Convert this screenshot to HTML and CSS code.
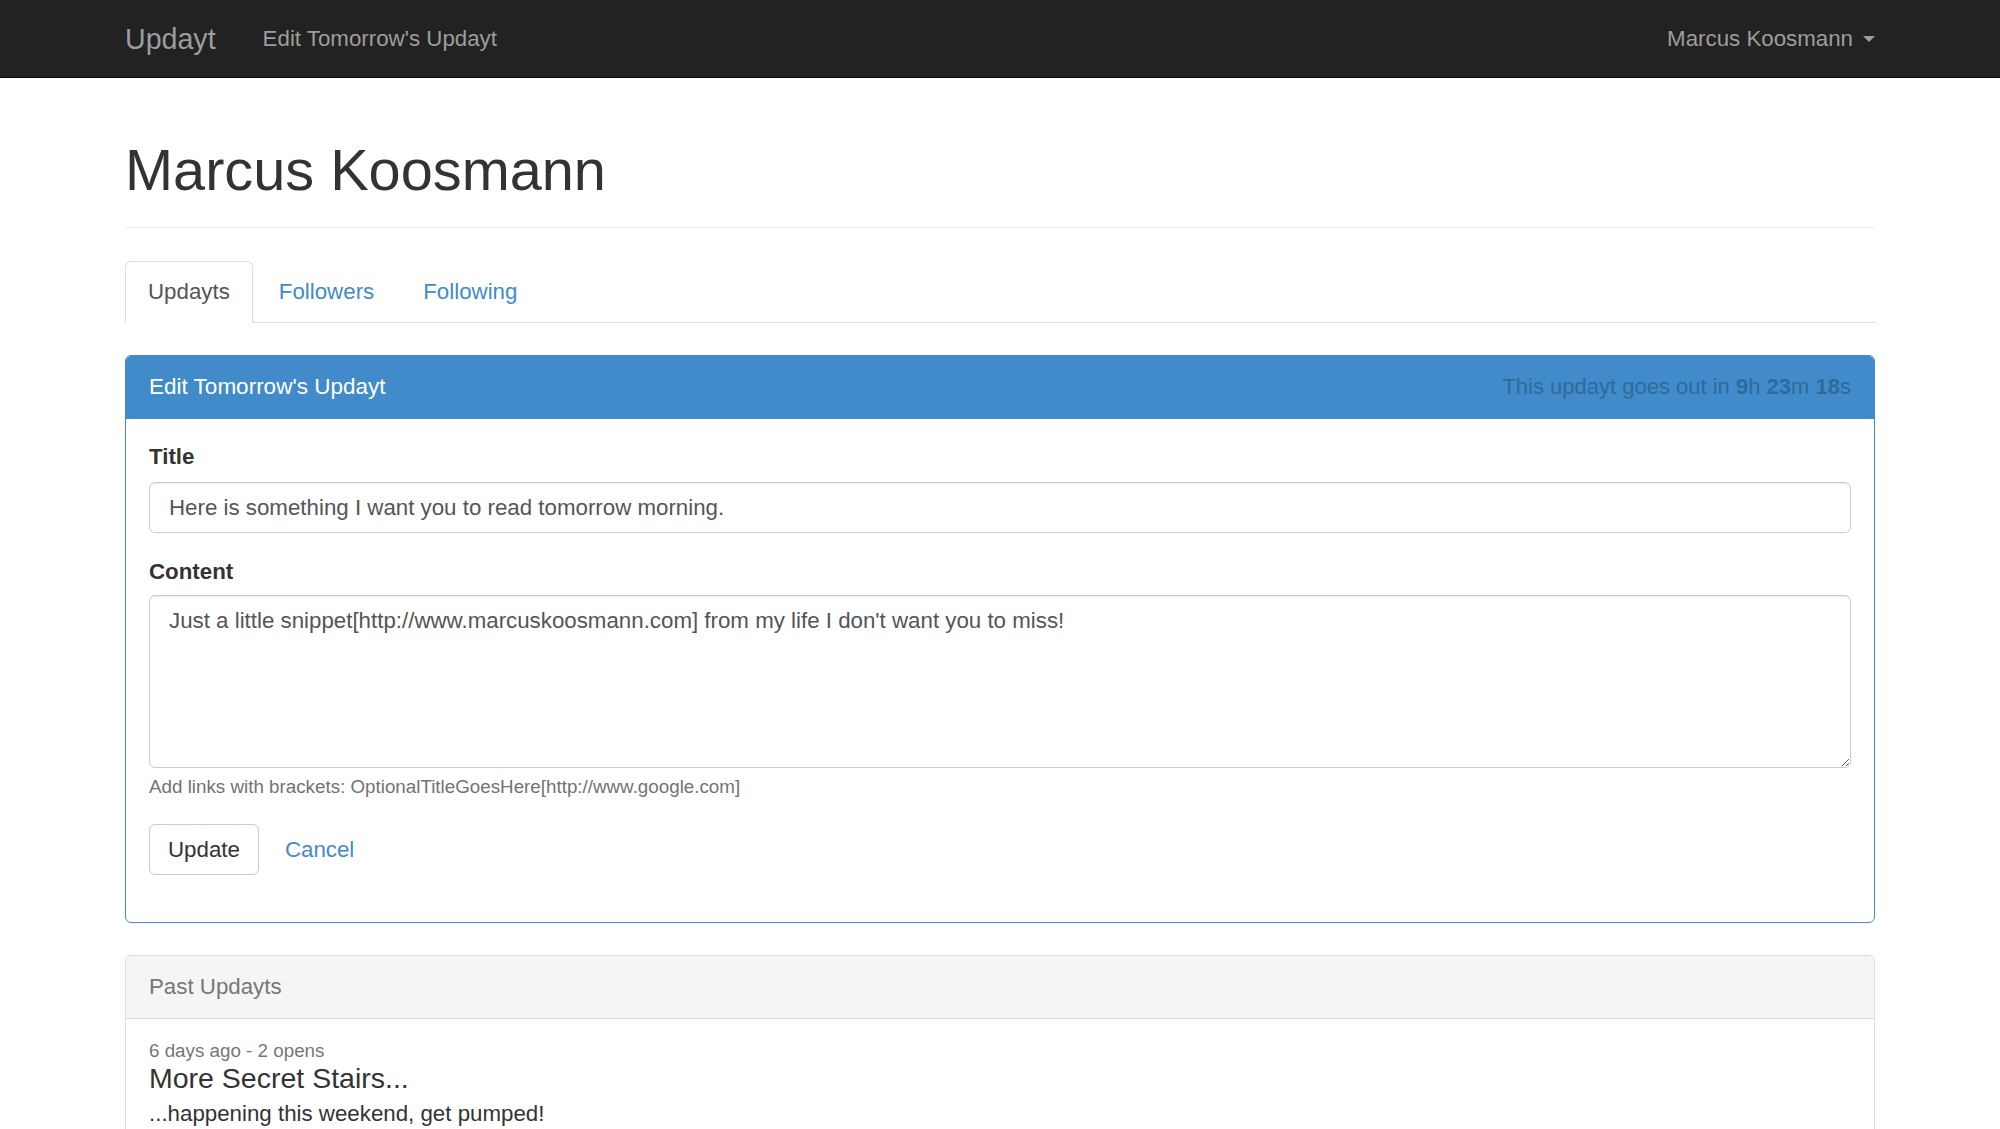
FILE: index.html
```html
<!DOCTYPE html>
<html lang="en">
<head>
<meta charset="utf-8">
<title>Updayt</title>
<link rel="stylesheet" href="styles.css">
</head>
<body>
<nav class="navbar">
  <div class="container nav-inner">
    <div class="nav-left">
      <a class="brand" href="#">Updayt</a>
      <a class="nav-link" href="#">Edit Tomorrow's Updayt</a>
    </div>
    <a class="nav-user" href="#">Marcus Koosmann<span class="caret"></span></a>
  </div>
</nav>

<main class="container">
  <div class="page-header">
    <h1>Marcus Koosmann</h1>
  </div>

  <ul class="tabs">
    <li class="tab active"><a href="#">Updayts</a></li>
    <li class="tab"><a href="#">Followers</a></li>
    <li class="tab"><a href="#">Following</a></li>
  </ul>

  <section class="panel panel-primary">
    <div class="panel-heading">
      <span class="panel-title">Edit Tomorrow's Updayt</span>
      <span class="countdown">This updayt goes out in <b>9</b>h <b>23</b>m <b>18</b>s</span>
    </div>
    <div class="panel-body">
      <div class="form-group">
        <label class="label" for="title">Title</label>
        <input class="input" id="title" type="text" value="Here is something I want you to read tomorrow morning.">
      </div>
      <div class="form-group">
        <label class="label" for="content">Content</label>
        <textarea class="input textarea" id="content">Just a little snippet[http://www.marcuskoosmann.com] from my life I don't want you to miss!</textarea>
        <p class="help">Add links with brackets: OptionalTitleGoesHere[http://www.google.com]</p>
      </div>
      <div class="form-group actions">
        <button class="btn" type="button">Update</button>
        <a class="cancel" href="#">Cancel</a>
      </div>
    </div>
  </section>

  <section class="panel panel-default past">
    <div class="panel-heading">
      <span class="panel-title">Past Updayts</span>
    </div>
    <div class="panel-body past-body">
      <div class="meta">6 days ago - 2 opens</div>
      <h4 class="post-title">More Secret Stairs...</h4>
      <p class="post-text">...happening this weekend, get pumped!</p>
    </div>
  </section>
</main>
</body>
</html>
```

FILE: styles.css
```css
* { box-sizing: border-box; }

html, body {
  margin: 0;
  padding: 0;
  background: #fff;
}

body {
  font-family: "Liberation Sans", Arial, Helvetica, sans-serif;
  font-size: 22.3px;
  line-height: 30px;
  color: #333;
}

a { text-decoration: none; }

.container {
  width: 1750px;
  margin: 0 auto;
}

/* Navbar */
.navbar {
  background: #222;
  border-bottom: 1px solid #080808;
  height: 78px;
}

.nav-inner {
  height: 77px;
  display: flex;
  align-items: center;
  justify-content: space-between;
}

.nav-left {
  display: flex;
  align-items: center;
}

.brand {
  font-size: 28.6px;
  color: #9d9d9d;
  margin-right: 47px;
}

.nav-link {
  color: #9d9d9d;
  font-size: 22.3px;
}

.nav-user {
  color: #9d9d9d;
  display: flex;
  align-items: center;
}

.caret {
  display: inline-block;
  width: 0;
  height: 0;
  margin-left: 10px;
  border-top: 6px solid #9d9d9d;
  border-left: 6px solid transparent;
  border-right: 6px solid transparent;
}

/* Page header */
.page-header {
  margin-top: 61px;
  padding-bottom: 26px;
  border-bottom: 1px solid #eee;
}

.page-header h1 {
  margin: 0;
  font-size: 57.7px;
  line-height: 62px;
  font-weight: 500;
  color: #333;
}

/* Tabs */
.tabs {
  list-style: none;
  margin: 33px 0 0;
  padding: 0;
  display: flex;
  border-bottom: 1px solid #ddd;
}

.tab {
  margin-right: 3px;
  margin-bottom: -1px;
}

.tab a {
  display: block;
  padding: 15px 22px;
  line-height: 30px;
  border: 1px solid transparent;
  border-radius: 6px 6px 0 0;
  color: #428bca;
}

.tab.active a {
  color: #555;
  background: #fff;
  border-color: #ddd #ddd transparent;
}

/* Panels */
.panel {
  margin-top: 32px;
  border: 1px solid #ddd;
  border-radius: 6px;
  background: #fff;
}

.panel.past {
  margin-top: 32px;
}

.panel-heading {
  display: flex;
  justify-content: space-between;
  align-items: center;
  padding: 16px 23px;
  line-height: 30px;
  border-bottom: 1px solid #ddd;
  border-radius: 5px 5px 0 0;
}

.panel-title {
  font-size: 22.5px;
}

.panel-primary {
  border-color: #428bca;
}

.panel-primary .panel-heading {
  background: #428bca;
  border-bottom-color: #428bca;
  color: #fff;
}

.countdown {
  font-size: 22px;
  color: #2e6a9b;
}

.countdown b { font-weight: 700; }

.panel-default .panel-heading {
  background: #f5f5f5;
  color: #777;
}

.panel-default .panel-title {
  font-size: 22.3px;
}

.panel-body {
  padding: 23px;
}

.past-body {
  padding-top: 21px;
}

/* Form */
.form-group {
  margin-bottom: 24px;
}

.actions {
  display: flex;
  align-items: center;
}

.label {
  display: block;
  font-weight: 700;
  line-height: 30px;
  margin-bottom: 10px;
}

.form-group + .form-group .label {
  margin-bottom: 8px;
}

.input {
  display: block;
  width: 100%;
  height: 51px;
  padding: 0 19px;
  font-family: "Liberation Sans", Arial, Helvetica, sans-serif;
  font-size: 22.3px;
  color: #555;
  background: #fff;
  border: 1px solid #ccc;
  border-radius: 6px;
  box-shadow: inset 0 1px 1px rgba(0, 0, 0, 0.075);
  outline: none;
}

.textarea {
  height: 173px;
  padding: 10px 19px;
  line-height: 30px;
  resize: vertical;
}

.help {
  margin: 6px 0 0;
  font-size: 18.8px;
  line-height: 26px;
  color: #737373;
}

.btn {
  height: 51px;
  padding: 0 18px;
  font-family: "Liberation Sans", Arial, Helvetica, sans-serif;
  font-size: 22.3px;
  color: #333;
  background: #fff;
  border: 1px solid #ccc;
  border-radius: 6px;
}

.cancel {
  margin-left: 26px;
  color: #428bca;
}

/* Past updayts */
.meta {
  font-size: 18.8px;
  line-height: 22px;
  color: #777;
}

.post-title {
  margin: 0;
  font-size: 28.5px;
  line-height: 33px;
  font-weight: 500;
  color: #333;
}

.post-text {
  margin: 4px 0 40px;
}
```
